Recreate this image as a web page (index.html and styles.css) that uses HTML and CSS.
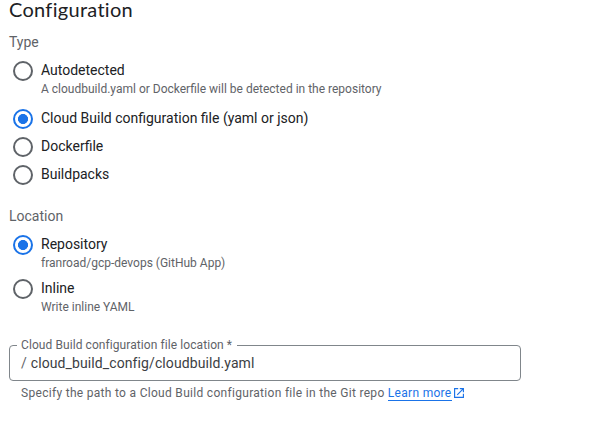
FILE: index.html
```html
<!DOCTYPE html>
<html lang="en">
<head>
<meta charset="utf-8">
<title>Configuration</title>
<link rel="stylesheet" href="styles.css">
</head>
<body>
<main class="form">
<h1 class="title">Configuration</h1>
<section class="group type">
<h2 class="heading">Type</h2>
<div class="option tall"><span class="radio"></span><div class="text"><div class="label">Autodetected</div><div class="hint">A cloudbuild.yaml or Dockerfile will be detected in the repository</div></div></div>
<div class="option"><span class="radio checked"></span><div class="text"><div class="label">Cloud Build configuration file (yaml or json)</div></div></div>
<div class="option"><span class="radio"></span><div class="text"><div class="label">Dockerfile</div></div></div>
<div class="option"><span class="radio"></span><div class="text"><div class="label">Buildpacks</div></div></div>
</section>
<section class="group location">
<h2 class="heading">Location</h2>
<div class="option repo"><span class="radio checked"></span><div class="text"><div class="label">Repository</div><div class="hint">franroad/gcp-devops (GitHub App)</div></div></div>
<div class="option"><span class="radio"></span><div class="text"><div class="label">Inline</div><div class="hint">Write inline YAML</div></div></div>
</section>
<fieldset class="field">
<legend>Cloud Build configuration file location *</legend>
<div class="value"><span class="prefix">/</span><span class="path">cloud_build_config/cloudbuild.yaml</span></div>
</fieldset>
<p class="help">Specify the path to a Cloud Build configuration file in the Git repo <a href="#">Learn more</a><svg class="external" viewBox="0 0 10 10"><path d="M4.2.6H.6v8.8h8.8V5.8M5.8.6h3.6v3.6M9.4.6 3.2 6.8"/></svg></p>
</main>
</body>
</html>
```
FILE: styles.css
```css
* { box-sizing: border-box; }
body { margin: 0; background: #fff; color: #202124; font-family: Roboto, sans-serif; }
.form { padding: 0 9px; width: 530px; }
h1, h2, p { margin: 0; font-weight: 400; }
.title { font: 400 20px/19px Lato, sans-serif; letter-spacing: 0.29px; font-variant-ligatures: none; height: 32px; }
.heading { font-size: 14px; line-height: 20px; color: #5f6368; }
.option { display: flex; gap: 8px; min-height: 28px; }
.radio { flex: none; width: 20px; height: 20px; margin: 1px 0 0 4px; border: 2px solid #5f6368; border-radius: 50%; }
.radio.checked { border-color: #1a73e8; background: radial-gradient(circle, #1a73e8 4.7px, transparent 5.3px); }
.label { font-size: 14px; line-height: 20px; }
.hint { font-size: 12px; line-height: 16px; padding-top: 1px; color: #5f6368; }
.type .heading { margin-bottom: 8px; }
.tall { min-height: 48px; }
.location { margin-top: 14px; }
.location .heading { margin-bottom: 8px; }
.repo { min-height: 44px; }
.field { margin: 23px 0 0; padding: 0 10px; border: 1px solid #80868b; border-radius: 4px; width: 512px; height: 43px; }
legend { font-size: 12px; line-height: 14px; height: 14px; letter-spacing: 0.08px; color: #5f6368; padding: 0 5px 0 4px; margin-left: -3px; }
.value { display: flex; gap: 4px; font-size: 14px; line-height: 20px; padding: 1px; color: #3c4043; }
.prefix { color: #5f6368; }
.path { letter-spacing: 0.1px; }
.help { font-size: 12px; line-height: 16px; letter-spacing: 0.3px; color: #5f6368; margin: 4px 0 0 12px; white-space: nowrap; }
.help a { color: #1a73e8; text-decoration: none; border-bottom: 1px solid #1a73e8; }
.external { width: 10px; height: 10px; margin-left: 2px; fill: none; stroke: #1a73e8; stroke-width: 1.15; vertical-align: -1px; }
```
